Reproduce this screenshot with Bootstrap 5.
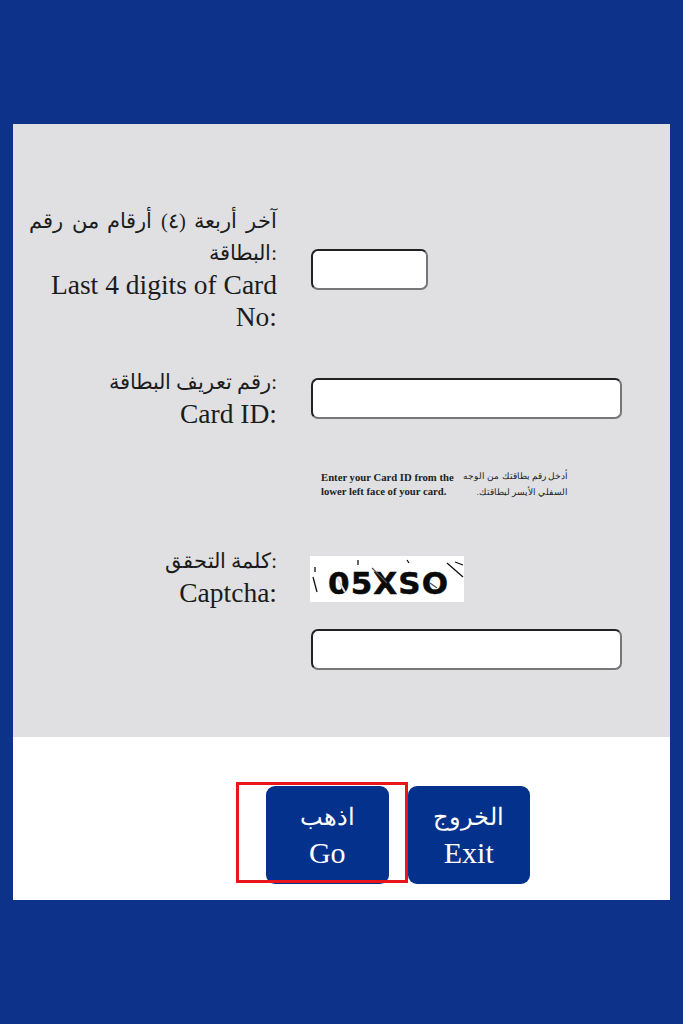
<!DOCTYPE html>
<html lang="ar">
<head>
<meta charset="utf-8">
<title>Card check</title>
<link href="https://cdn.jsdelivr.net/npm/bootstrap@5.3.0/dist/css/bootstrap.min.css" rel="stylesheet">
<style>
html,body{height:100%}
body.page-bg{background:#0c3389;font-family:"Liberation Serif","DejaVu Serif",serif;color:#1c1c1c;padding:124px 13px 0}
.sheet{background:#fff;height:776px}
.grey-area{background:#e0e0e3;height:613px;padding-top:81px}
.field-row{margin-bottom:33px}
.lbl{width:264px;margin-right:34px;flex:none;font-size:27.5px;line-height:32px;text-align:right;white-space:nowrap}
.lbl .ar{display:block;font-size:20.5px}
.lbl .ar-wide{word-spacing:3.5px}
.inp.form-control{height:41px;padding:0 8px;background:#fff;border-radius:7px;border:2.5px solid;border-color:#222 #777 #777 #222}
.inp-s.form-control{width:117px}
.inp-l.form-control{width:311px}
.hint{margin:41px 0 0 308px;width:247px;height:74px;font-size:10.7px;line-height:13.5px;font-weight:700;color:#222}
.hint .ar-hint{font-size:8.7px;font-weight:400;line-height:16px;margin-top:-3px;width:108px;text-align:right}
.captcha{display:block;width:154px;height:46px;background:#fff;margin-top:11px;margin-left:-1px}
.lower-input{margin:20px 0 0 298px}
.btn-row{padding:49px 0 0 253px;gap:19px;position:relative}
.btn.act{width:122.5px;height:98px;background:#04318b;color:#fff;border:0;border-radius:9px;font-size:30px;line-height:36px;padding:0;font-family:"Liberation Serif",serif}
.btn.act .ar{display:block;font-size:24px}
.hl-box{position:absolute;left:223px;top:45px;width:172px;height:101px;border:3.5px solid #e8161c;pointer-events:none}
</style>
</head>
<body class="page-bg">
<div class="sheet">
  <div class="grey-area">
    <div class="d-flex align-items-center field-row">
      <label class="lbl"><span class="ar ar-wide">آخر أربعة (٤) أرقام من رقم<br>البطاقة:</span>Last 4 digits of Card<br>No:</label>
      <input class="form-control inp inp-s" type="text">
    </div>
    <div class="d-flex align-items-center">
      <label class="lbl"><span class="ar">رقم تعريف البطاقة:</span>Card ID:</label>
      <input class="form-control inp inp-l" type="text">
    </div>
    <div class="hint d-flex justify-content-between">
      <div>Enter your Card ID from the<br>lower left face of your card.</div>
      <div class="ar-hint" dir="rtl">أدخل رقم بطاقتك من الوجه<br>السفلي الأيسر لبطاقتك.</div>
    </div>
    <div class="d-flex align-items-start">
      <label class="lbl"><span class="ar">كلمة التحقق:</span>Captcha:</label>
      <svg class="captcha" viewBox="0 0 154 46" role="img" aria-label="captcha">
        <text x="18" y="38" font-family="DejaVu Sans" font-weight="700" font-size="31" fill="#0a0a0a" textLength="120" stroke="#0a0a0a" stroke-width=".5">05XSO</text>
        <g stroke="#111" stroke-width="1.3" fill="none">
          <path d="M5 11v5M3 21l4 15M48 4v5M97 4l2 3M137 7l16 14M145 6l8 3"/>
          <path d="M62 12l15 15M120 27l7 5" stroke="#555"/>
          <path d="M27 22l8 14" stroke="#ddd" stroke-width="2"/>
        </g>
      </svg>
    </div>
    <input class="form-control inp inp-l lower-input" type="text">
  </div>
  <div class="d-flex btn-row">
    <button class="btn act" type="button"><span class="ar">اذهب</span>Go</button>
    <button class="btn act" type="button"><span class="ar">الخروج</span>Exit</button>
    <div class="hl-box"></div>
  </div>
</div>
<script src="https://cdn.jsdelivr.net/npm/bootstrap@5.3.0/dist/js/bootstrap.bundle.min.js"></script>
</body>
</html>
